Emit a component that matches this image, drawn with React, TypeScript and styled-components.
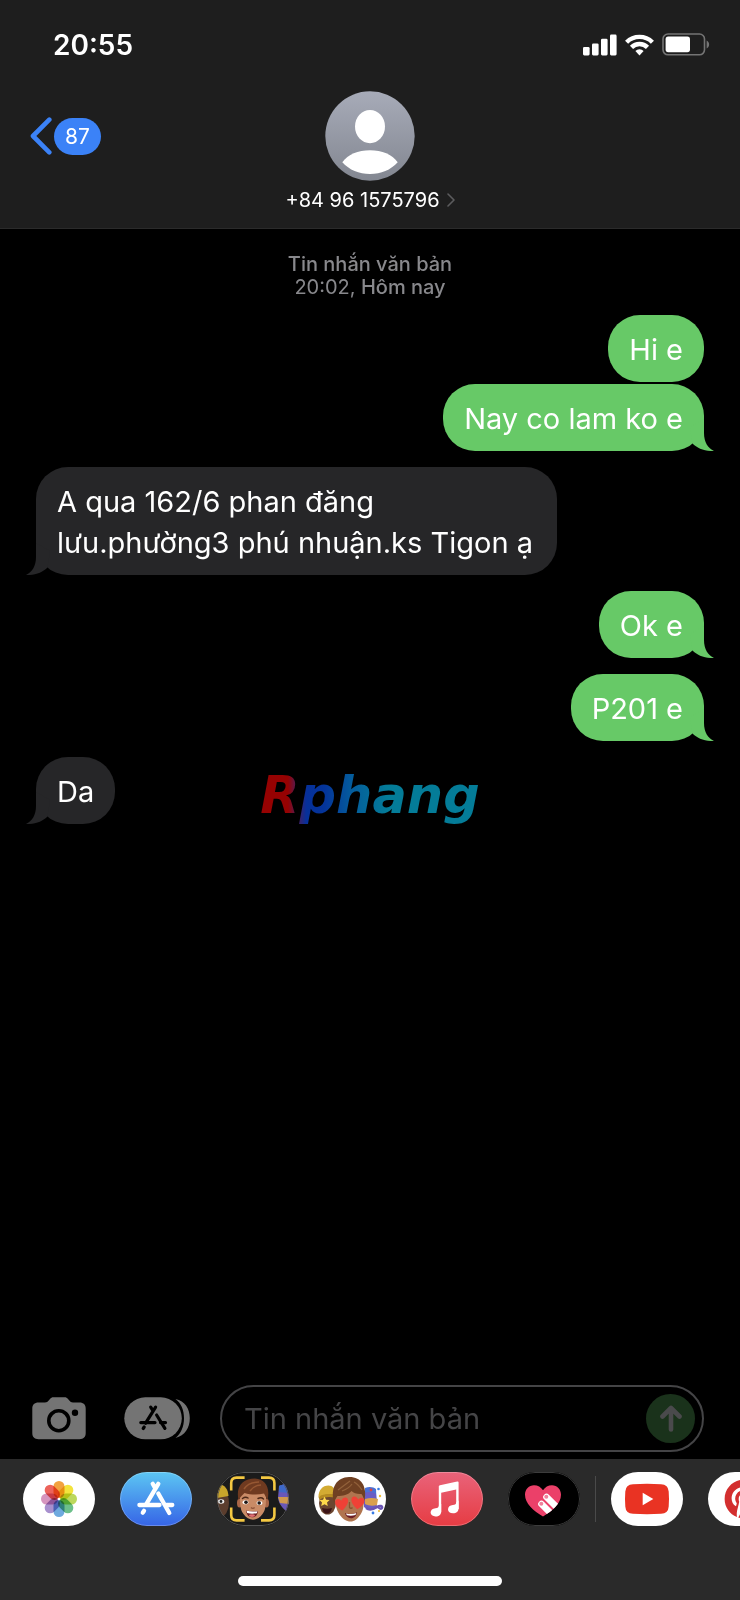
import React from 'react';
import styled, { createGlobalStyle } from 'styled-components';
import { FaPinterest } from 'react-icons/fa';

const GlobalStyle = createGlobalStyle`
  *, *::before, *::after { box-sizing: border-box; }
  body { margin: 0; background: #000; }
  button { border: 0; padding: 0; margin: 0; background: none; font: inherit; color: inherit; cursor: pointer; }
  svg { display: block; flex: none; }
`;

const Screen = styled.div`
  position: relative;
  display: flex;
  flex-direction: column;
  min-height: 100vh;
  overflow: hidden;
  background: #000;
  color: #fff;
  font-family: Inter, 'Noto Sans', sans-serif;
`;

const Header = styled.header`
  background: #1e1e1e;
  border-bottom: 1px solid #2b2b2b;
`;

const StatusBar = styled.div`
  display: flex;
  align-items: center;
  justify-content: space-between;
  height: 91px;
  padding: 0 30px 2px 53px;
`;

const Clock = styled.time`
  font-size: 28px;
  line-height: 34px;
  font-weight: 600;
`;

const StatusIcons = styled.div`
  display: flex;
  align-items: center;
  gap: 8px;
`;

const NavBar = styled.nav`
  display: grid;
  grid-template-columns: 1fr auto 1fr;
  padding: 0 30px 16px;
`;

const BackButton = styled.button`
  display: flex;
  align-items: center;
  justify-self: start;
  gap: 2px;
  height: 90px;
`;

const UnreadBadge = styled.span`
  min-width: 47px;
  padding: 0 11px;
  border-radius: 19px;
  background: #3b82f7;
  font-size: 21px;
  line-height: 37px;
  text-align: center;
`;

const ContactButton = styled.button`
  display: flex;
  flex-direction: column;
  align-items: center;
  gap: 7px;
`;

const ContactName = styled.span`
  display: flex;
  align-items: center;
  gap: 7px;
  font-size: 20px;
  line-height: 24px;
`;

const MessageList = styled.main`
  display: flex;
  flex: 1;
  flex-direction: column;
  gap: 16px;
  padding: 24px 36px;
`;

const Stamp = styled.p`
  margin: 0;
  color: #88888c;
  font-size: 20px;
  line-height: 23px;
  text-align: center;
  font-weight: 500;
`;

const StampTime = styled.time`
  font-weight: 400;
`;

const Group = styled.div<{ $sent?: boolean }>`
  display: flex;
  flex-direction: column;
  align-items: ${(p) => (p.$sent ? 'flex-end' : 'flex-start')};
  gap: 2px;
`;

const BubbleBox = styled.div<{ $sent?: boolean }>`
  position: relative;
  max-width: 78%;
  padding: 14px 21px 12px;
  border-radius: 32px;
  background: ${(p) => (p.$sent ? '#67c967' : '#262628')};
  font-size: 29px;
  line-height: 41px;
`;

const Tail = styled.svg<{ $sent?: boolean }>`
  position: absolute;
  bottom: 0;
  ${(p) => (p.$sent ? 'right: -10px;' : 'left: -10px; transform: scaleX(-1);')}
  fill: ${(p) => (p.$sent ? '#67c967' : '#262628')};
`;

const Watermark = styled.div`
  position: absolute;
  top: 50%;
  left: 50%;
  transform: translate(-50%, -50%);
  padding: 0 4px 8px;
  background: linear-gradient(90deg, #960202 14%, #4a1d5c 18%, #06309a 22%, #04349a 30%, #045c9c 42%, #047c98 58%);
  background-clip: text;
  -webkit-background-clip: text;
  color: transparent;
  font-family: 'DejaVu Sans', sans-serif;
  font-size: 51px;
  line-height: 60px;
  font-weight: 700;
  font-style: italic;
  pointer-events: none;
`;

const Composer = styled.form`
  display: flex;
  align-items: center;
  padding: 0 36px 7px 32px;
`;

const ToolButton = styled.button`
  margin-right: 38px;
  & + & { margin-right: 29px; }
`;

const Field = styled.div`
  display: flex;
  flex: 1;
  align-items: center;
  min-width: 0;
  height: 67px;
  padding: 0 7px 0 22px;
  border: 2px solid #444446;
  border-radius: 34px;
`;

const TextInput = styled.input`
  flex: 1;
  min-width: 0;
  padding: 0;
  border: 0;
  outline: 0;
  background: none;
  color: #fff;
  font-family: inherit;
  font-size: 29px;
  line-height: 41px;
  &::placeholder { color: #454547; opacity: 1; }
`;

const SendButton = styled.button`
  display: grid;
  place-items: center;
  width: 49px;
  height: 49px;
  border-radius: 50%;
  background: #1a321b;
`;

const Drawer = styled.footer`
  background: #2a2a2a;
  padding: 13px 0 14px;
`;

const AppStrip = styled.div`
  display: flex;
  align-items: center;
  gap: 25px;
  padding-left: 23px;
  overflow: hidden;
`;

const AppPill = styled.button<{ $fill: string; $edge?: string }>`
  position: relative;
  display: grid;
  place-items: center;
  flex: none;
  width: 72px;
  height: 54px;
  overflow: hidden;
  border-radius: 27px;
  background: ${(p) => p.$fill};
  &::after {
    content: '';
    position: absolute;
    inset: 0;
    border: 1px solid ${(p) => p.$edge ?? 'transparent'};
    border-radius: inherit;
  }
`;

const Divider = styled.span`
  flex: none;
  width: 1px;
  height: 46px;
  margin: 0 -10px;
  background: #4a4a4a;
`;

const HomeIndicator = styled.div`
  width: 264px;
  height: 10px;
  margin: 50px auto 0;
  border-radius: 5px;
  background: #fff;
`;

const Signal = () => (
  <svg width="34" height="22" viewBox="0 0 34 22" fill="#fff">
    <rect x="0" y="13" width="6.600" height="8.400" rx="1.300" />
    <rect x="9" y="9.500" width="6.600" height="11.900" rx="1.300" />
    <rect x="18" y="4.800" width="6.600" height="16.600" rx="1.300" />
    <rect x="27" y="0.600" width="6.600" height="20.800" rx="1.300" />
  </svg>
);

const Wifi = () => (
  <svg width="29" height="22" viewBox="0 0 29 22" fill="none" stroke="#fff" strokeWidth="4.400">
    <path d="M1.600 8.200a18.400 18.400 0 0 1 25.800 0" />
    <path d="M6.500 13.400a11.200 11.200 0 0 1 16 0" />
    <path d="M10.400 17a5.800 5.800 0 0 1 8.200 0l-4.100 4.400z" fill="#fff" stroke="none" />
  </svg>
);

const Battery = () => (
  <svg width="48" height="23" viewBox="0 0 48 23">
    <rect x="1" y="1" width="41.500" height="20.800" rx="5" fill="none" stroke="#747474" strokeWidth="1.600" />
    <rect x="3.600" y="3.600" width="24.400" height="15.600" rx="2.600" fill="#fff" />
    <path d="M44.600 7.600c3.400 1.600 3.400 6.400 0 8z" fill="#747474" />
  </svg>
);

const Avatar = () => (
  <svg width="90" height="90" viewBox="0 0 90 90">
    <defs>
      <linearGradient id="avatar" x1="0" y1="0" x2="0" y2="1">
        <stop offset="0" stopColor="#a7abb8" />
        <stop offset="1" stopColor="#838791" />
      </linearGradient>
    </defs>
    <circle cx="45" cy="45" r="44.700" fill="url(#avatar)" />
    <ellipse cx="45" cy="35.600" rx="15" ry="16.600" fill="#fff" />
    <path d="M17.300 71.200C23 63.600 33 59.300 45 59.300s22 4.300 27.700 11.900C65.700 79 56 82.900 45 82.900S24.300 79 17.300 71.200z" fill="#fff" />
  </svg>
);

const Camera = () => (
  <svg width="54" height="43" viewBox="0 0 54 43">
    <path d="M6.500 5.500H13c1.800 0 2.700-.6 3.700-1.900l1.300-1.700C18.900.8 19.900.3 21.500.3h11c1.600 0 2.600.5 3.500 1.600l1.300 1.700c1 1.300 1.900 1.900 3.700 1.900h6.500c4 0 6.200 2.200 6.200 6.200v24.300c0 4-2.200 6.200-6.200 6.200h-41c-4 0-6.200-2.200-6.200-6.200V11.700c0-4 2.200-6.200 6.200-6.200z" fill="#747474" />
    <circle cx="26.800" cy="23.700" r="10" fill="none" stroke="#000" strokeWidth="3.600" />
    <circle cx="43" cy="15.700" r="3.200" fill="#000" />
  </svg>
);

const AppsIcon = () => (
  <svg width="67" height="43" viewBox="0 0 67 43">
    <rect x="0.300" y="0.300" width="57.500" height="42" rx="21" fill="#747474" />
    <path d="M51.500 2c5.500 4 8.500 11 8.500 19.300S57 36.500 51.500 41C61 38.500 65.800 31 65.800 21.300S61 4.200 51.500 2z" fill="#747474" />
    <g fill="none" stroke="#000" strokeWidth="3.200" strokeLinecap="round">
      <path d="M31.600 10.200l-10 16M26.700 10.200l2.200 3.400M32.600 18l8.300 13.300" />
      <path d="M16.800 25.600h14.200M36.500 25.600h5M20.200 30l-1 1.500" />
    </g>
  </svg>
);

const Photos = () => {
  const petals = ['#f2a23f', '#f3e33c', '#bcd85c', '#6cbf8a', '#6ea9de', '#a890ce', '#d695be', '#ec635b'];
  return (
    <svg width="72" height="54" viewBox="0 0 72 54">
      {petals.map((color, i) => (
        <rect key={color} x="30.500" y="9" width="11" height="17" rx="5.500" fill={color} transform={`rotate(${i * 45} 36 27)`} style={{ mixBlendMode: 'multiply' }} />
      ))}
      <circle cx="36" cy="27" r="1.300" fill="#fff" />
    </svg>
  );
};

const AppStore = () => (
  <svg width="72" height="54" viewBox="0 0 72 54" fill="none" stroke="#fff" strokeWidth="4.300" strokeLinecap="round">
    <path d="M38.300 11.800L26 32.600M32.700 11.800l2.600 4.600M38.300 21.500L49.300 41" />
    <path d="M19.400 33H39.500M46.500 33H52.300M24 38.800l-1.200 1.900" />
  </svg>
);

const MemojiCamera = () => (
  <svg width="72" height="54" viewBox="0 0 72 54">
    <rect width="72" height="54" fill="#1b1b1b" />
    <ellipse cx="3" cy="31" rx="9" ry="14" fill="#5b3d2d" />
    <path d="M0 13c7-2 11 4 11.500 11L0 26z" fill="#c9a52b" />
    <ellipse cx="4" cy="29.500" rx="3.300" ry="2.200" fill="#eee" />
    <circle cx="4" cy="29.500" r="1.400" fill="#222" />
    <path d="M62 14c4-2 7-2 10 0v27c-5-3-10-8-11-15z" fill="#6957b8" />
    <path d="M62 14c4-2 7-2 10 0v7l-10-1z" fill="#3e68c8" />
    <path d="M61 25h11v7l-9-1z" fill="#cf994e" />
    <ellipse cx="22.500" cy="31" rx="2.500" ry="4.500" fill="#a96647" />
    <ellipse cx="49.500" cy="31" rx="2.500" ry="4.500" fill="#a96647" />
    <path d="M23 24C23 12 49 12 49 24c0 10-.5 14-3.500 18-2.500 3.700-6 5.700-9.500 5.700s-7-2-9.500-5.700C23.500 38 23 34 23 24z" fill="#c98b66" />
    <path d="M21.500 28C18.500 14 26 6.500 38 6.500 48 7 53.500 15 50.500 28c-1.600-2.500-2-4-3.500-6.500-6 1.500-13 1.500-19.500-.5-2 2-4 3.500-6 7z" fill="#6f3a20" />
    <path d="M27 17c3-5 9-7 15-7M33 19c3-4 7-6 11-6" stroke="#965732" strokeWidth="1.500" fill="none" />
    <path d="M25.500 26.500c2-1.500 4-1.500 5.500-.5M41 26.500c2-1 4-1 5.500.5" stroke="#4c2817" strokeWidth="1.400" fill="none" strokeLinecap="round" />
    <ellipse cx="28.500" cy="30.300" rx="2.900" ry="2" fill="#fff" />
    <ellipse cx="42.500" cy="31" rx="2.900" ry="2" fill="#fff" />
    <circle cx="29" cy="30.300" r="1.800" fill="#1e1714" />
    <circle cx="42.200" cy="31" r="1.800" fill="#1e1714" />
    <path d="M34 35.500c1 1.200 2.500 1.200 3.600 0" stroke="#8f5439" strokeWidth="1.400" fill="none" />
    <path d="M29 38.500c4 1 8 1 12 .4-.4 4.200-2.800 6.300-6 6.300-3.300 0-5.500-2.500-6-6.700z" fill="#6d2024" />
    <path d="M29.500 38.800c4 .9 7.500.9 11 .4l-.7 2c-3.400.7-6.300.7-9.600-.2z" fill="#fff" />
    <ellipse cx="35" cy="43.600" rx="3" ry="1.300" fill="#df6f75" />
    <path d="M14.200 18.500V11q0-5.400 5.400-5.400h8M44 5.600h8q5.400 0 5.400 5.400v7.500M57.400 35.500V43q0 5.400-5.400 5.400h-8M27.600 48.400h-8q-5.400 0-5.400-5.400v-7.500" fill="none" stroke="#f4c842" strokeWidth="2.600" />
  </svg>
);

const MemojiStickers = () => (
  <svg width="72" height="54" viewBox="0 0 72 54">
    <ellipse cx="13.500" cy="31" rx="8.500" ry="11.500" fill="#6b4630" />
    <path d="M4.500 25c0-7 4-11.500 10-11.500 4 0 7 3 7 9.500-5-1-11-1-17 2z" fill="#d3ab32" />
    <path d="M4.500 25c5-3.400 11-3.600 17-2v3c-6-1.600-11-1.200-16 2z" fill="#b58b20" />
    <path d="M10.500 24.500l1.600 3.200 3.500.3-2.600 2.500.8 3.600-3.300-1.800-3.300 1.800.8-3.600-2.500-2.500 3.500-.3z" fill="#ffd94a" />
    <path d="M8 36c3 1 7 1 10 0-1 4-2.500 5.500-5 5.500S9 40 8 36z" fill="#3c1418" />
    <path d="M51 16c4-2 9-1 11 1l.5 10H51z" fill="#4a70d4" />
    <path d="M50 21c5-2 9-1 12 1l1 14c-5 3-9 2-13-1z" fill="#6a5cc3" />
    <path d="M51 27c4-1.500 9-1.500 13 0l-1 6c-4 1-8 1-12-1z" fill="#d9a04e" />
    <path d="M52 36c4 3 8 1 11-1s6-1 5 1-4-1-4-1" stroke="#6a55b5" strokeWidth="2.400" fill="none" />
    <circle cx="57" cy="18" r="1.400" fill="#d9453f" />
    <circle cx="64.500" cy="17" r="1.300" fill="#387be4" />
    <circle cx="66" cy="24" r="1.200" fill="#efbd35" />
    <circle cx="59" cy="41" r="1.400" fill="#387be4" />
    <circle cx="65" cy="39" r="1.100" fill="#efbd35" />
    <path d="M21 22C21 11 50 11 50 22c0 11-.5 16-3.500 20.500-3 4.500-6 7-10 7s-8-2.500-11-7c-3-4.500-4.500-9.500-4.500-20.500z" fill="#b0754f" />
    <path d="M20 31C16 15 23 5.500 35 5c12-.3 18.500 9 15.500 24-1-3-1.500-5-3-7-4 .5-8-1-10-3-3 4-9 5-14 5-1.500 2-2.500 4-3.500 7z" fill="#6f4022" />
    <path d="M24 18c4-3 8-6 12-9M28 19c5-2 8-4 10-7M40 10c4 2 6 5 8 8" stroke="#91603a" strokeWidth="1.300" fill="none" />
    <path d="M28.500 38.500c-4.500-2-7.800-5.500-7.400-8.800.4-3 4.200-3.700 6.200-.9 1.200-3.800 5.400-4.400 6.600-1.500 1.200 3-1.600 7.500-5.400 11.200z" fill="#ef4136" />
    <path d="M43.200 37.200c-3.900-3.500-6.700-7.700-5.600-10.700 1-2.900 5.200-2.400 6.600 1 2-2.800 5.800-2.200 6.200.8.400 3.200-2.800 6.800-7.200 8.900z" fill="#ef4136" />
    <path d="M35.500 30v5.500c.8 1 2.200 1 3 0" stroke="#87532f" strokeWidth="1.300" fill="none" />
    <path d="M31 41c4 1.400 8 1.200 12-.8-.5 3.800-2.800 6-6 6-3 0-5.300-2-6-5.200z" fill="#6b1d23" />
    <path d="M32 41.400c4 1 7 .8 10.300-.5l-.8 2c-3 1-6 1-8.700.3z" fill="#fff" />
  </svg>
);

const Music = () => (
  <svg width="72" height="54" viewBox="0 0 72 54" fill="#fff">
    <path d="M27.800 14.600c0-.8.400-1.200 1.200-1.400l17.200-3.700c.9-.2 1.400.2 1.400 1V37h-2.400V17.600l-15 3.200V40.300h-2.400z" />
    <path d="M30.200 32v7.500c0 3-2.200 5-5.600 5-3 0-5-1.600-5-3.900 0-2.500 2-3.900 4.800-4.300 2.500-.4 3.400-.8 3.400-2.500z" />
    <path d="M47.600 28.600v7.700c0 3-2.200 5-5.600 5-3 0-5-1.600-5-3.900 0-2.500 2-3.900 4.800-4.300 2.500-.4 3.400-.8 3.400-2.500z" />
  </svg>
);

const DigitalTouch = () => {
  const heart = 'M35 44.500C25.500 39 17 31.500 17 22.800 17 17.200 21 13.200 26 13.200c3.800 0 7 1.900 9 5 2-3.100 5.200-5 9-5 5 0 9 4 9 9.600 0 8.700-8.500 16.200-18 21.700z';
  return (
    <svg width="72" height="54" viewBox="0 0 72 54">
      <clipPath id="heart"><path d={heart} /></clipPath>
      <path d={heart} fill="#eb4069" />
      <g clipPath="url(#heart)">
        <path d="M38.500 25L52 38.500M33.500 32L45 43.500" stroke="#fff" strokeWidth="6.600" strokeLinecap="round" />
        <circle cx="38.300" cy="24.800" r="2" fill="#f0809b" />
        <circle cx="33.300" cy="31.800" r="2" fill="#f0809b" />
      </g>
    </svg>
  );
};

const YouTube = () => (
  <svg width="72" height="54" viewBox="0 0 72 54">
    <path d="M22 12.200Q36 11.300 50 12.200q7.300.3 7.700 7.300.6 7.500 0 15-.4 7-7.700 7.300-14 .9-28 0-7.300-.3-7.700-7.300-.6-7.500 0-15 .4-7 7.700-7.300z" fill="#e93323" />
    <path d="M31.700 20.700L42.300 27l-10.600 6.300z" fill="#fff" />
  </svg>
);

type BubbleProps = { sent?: boolean; tail?: boolean; children: React.ReactNode };

const Bubble = ({ sent, tail, children }: BubbleProps) => (
  <BubbleBox $sent={sent}>
    {children}
    {tail && (
      <Tail $sent={sent} width="24" height="32" viewBox="0 0 24 32" aria-hidden="true">
        <path d="M14 0V14C14 23 18 29.500 24 31.700 15 33 7 29 2.500 24.500L0 8z" />
      </Tail>
    )}
  </BubbleBox>
);

type Message = { text: string };
type Thread = { sent: boolean; messages: Message[] };

const threads: Thread[] = [
  { sent: true, messages: [{ text: 'Hi e' }, { text: 'Nay co lam ko e' }] },
  { sent: false, messages: [{ text: 'A qua 162/6 phan đăng lưu.phường3 phú nhuận.ks Tigon ạ' }] },
  { sent: true, messages: [{ text: 'Ok e' }] },
  { sent: true, messages: [{ text: 'P201 e' }] },
  { sent: false, messages: [{ text: 'Da' }] },
];

export default function App() {
  return (
    <Screen>
      <GlobalStyle />
      <Header>
        <StatusBar>
          <Clock>20:55</Clock>
          <StatusIcons>
            <Signal />
            <Wifi />
            <Battery />
          </StatusIcons>
        </StatusBar>
        <NavBar>
          <BackButton type="button">
            <svg width="22" height="38" viewBox="0 0 22 38" fill="none" stroke="#3b82f7" strokeWidth="4.600" strokeLinecap="round" strokeLinejoin="round">
              <path d="M19.300 2.700L3 19l16.300 16.300" />
            </svg>
            <UnreadBadge>87</UnreadBadge>
          </BackButton>
          <ContactButton type="button">
            <Avatar />
            <ContactName>
              +84 96 1575796
              <svg width="8" height="14" viewBox="0 0 8 14" fill="none" stroke="#5c5c5e" strokeWidth="1.600" strokeLinecap="round" strokeLinejoin="round">
                <path d="M1 1l6 6-6 6" />
              </svg>
            </ContactName>
          </ContactButton>
        </NavBar>
      </Header>

      <MessageList>
        <Stamp>
          Tin nhắn văn bản
          <br />
          <StampTime>20:02,</StampTime> Hôm nay
        </Stamp>
        {threads.map((thread, t) => (
          <Group key={t} $sent={thread.sent}>
            {thread.messages.map((message, m) => (
              <Bubble key={m} sent={thread.sent} tail={m === thread.messages.length - 1}>
                {message.text}
              </Bubble>
            ))}
          </Group>
        ))}
      </MessageList>

      <Composer onSubmit={(e) => e.preventDefault()}>
        <ToolButton type="button" aria-label="Camera"><Camera /></ToolButton>
        <ToolButton type="button" aria-label="Apps"><AppsIcon /></ToolButton>
        <Field>
          <TextInput type="text" aria-label="Tin nhắn văn bản" placeholder="Tin nhắn văn bản" />
          <SendButton type="submit" aria-label="Gửi">
            <svg width="22" height="27" viewBox="0 0 22 27" fill="none" stroke="#4a4a4c" strokeWidth="4.600" strokeLinecap="round" strokeLinejoin="round">
              <path d="M11 24.500V3.500M2.500 11.500L11 3l8.500 8.500" />
            </svg>
          </SendButton>
        </Field>
      </Composer>

      <Drawer>
        <AppStrip>
          <AppPill type="button" aria-label="Photos" $fill="#fff"><Photos /></AppPill>
          <AppPill type="button" aria-label="App Store" $fill="linear-gradient(#5cc6f3, #3664e6)" $edge="rgba(255,255,255,0.25)"><AppStore /></AppPill>
          <AppPill type="button" aria-label="Memoji" $fill="#1b1b1b" $edge="#555"><MemojiCamera /></AppPill>
          <AppPill type="button" aria-label="Stickers" $fill="#fff"><MemojiStickers /></AppPill>
          <AppPill type="button" aria-label="Music" $fill="linear-gradient(#e9637a, #e63c43)" $edge="rgba(255,255,255,0.25)"><Music /></AppPill>
          <AppPill type="button" aria-label="Digital Touch" $fill="#000" $edge="#3c3c3c"><DigitalTouch /></AppPill>
          <Divider />
          <AppPill type="button" aria-label="YouTube" $fill="#fff"><YouTube /></AppPill>
          <AppPill type="button" aria-label="Pinterest" $fill="#fff"><FaPinterest size={40} color="#d32f2f" /></AppPill>
        </AppStrip>
        <HomeIndicator />
      </Drawer>
      <Watermark>Rphang</Watermark>
    </Screen>
  );
}
